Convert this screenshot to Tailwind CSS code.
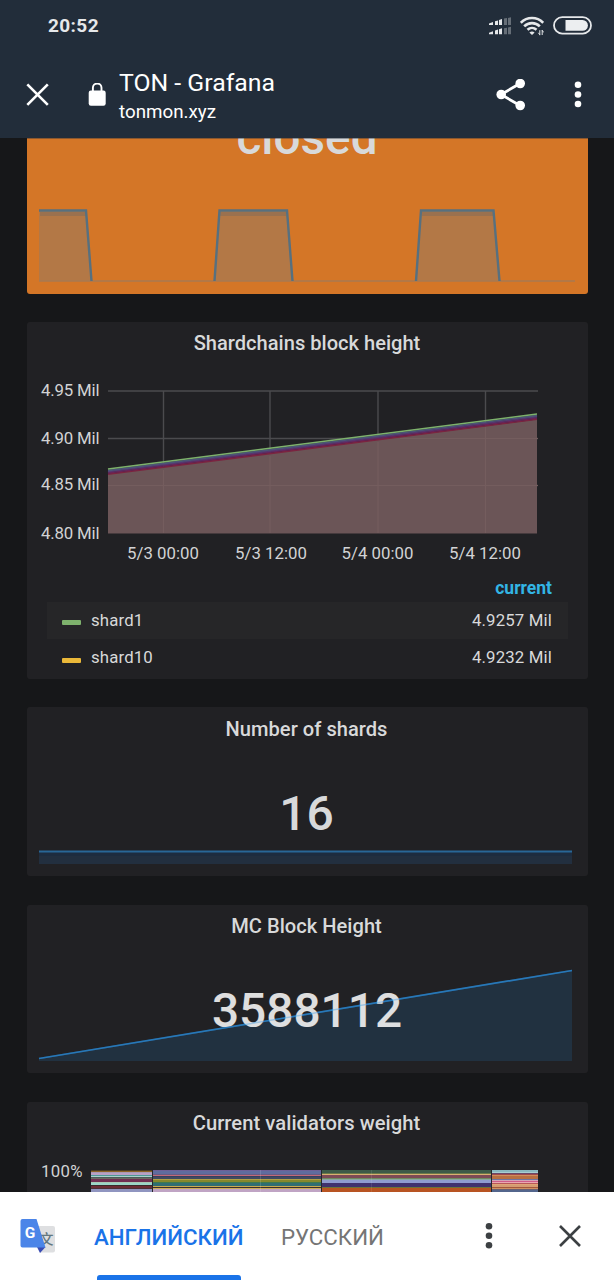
<!DOCTYPE html>
<html lang="ru">
  <head>
    <meta charset="UTF-8" />
    <meta name="viewport" content="width=device-width, initial-scale=1.0" />
    <title>TON - Grafana</title>
    <script src="https://cdn.jsdelivr.net/npm/@tailwindcss/browser@4"></script>
  </head>
  <body class="bg-[#161719] font-[Roboto,sans-serif]">
    <div class="w-[614px] h-[1280px] flex flex-col overflow-hidden">
      <!-- Browser header -->
      <header class="h-[138px] shrink-0 bg-[#222d3a] text-white flex flex-col">
        <div class="h-[51px] flex items-center justify-between pl-12 pr-[22px]">
          <span class="text-[19px] leading-none font-bold text-[#e6e8ea] tracking-[0.4px]">20:52</span>
          <div class="flex items-center gap-[9px]">
            <!-- Signal -->
            <svg class="w-6 h-[18px] -ml-px" viewBox="2 0 24 18" fill="#e6e8ea">
              <path d="M1.5 6.6l4.5-1.5V8H1.5zM8 4.2l3-.8V8H8zM12 3l3-.9V8h-3z" />
              <path d="M1.5 15.8l4.5-1.5V17.2H1.5zM8 13.4l3-.8V17.2H8zM12 12.2l3-.9V17.2h-3z" />
              <path d="M17 1.6l3-.7V8h-3zM21 .9l3-.7V8h-3zM17 11.2l3-.5V17.2h-3zM21 10.4l3-.6v7.4h-3z" opacity=".35" />
            </svg>
            <!-- Wi-Fi -->
            <svg class="w-6 h-5 -ml-[2px]" viewBox="0 0 24 20" fill="none" stroke="#e6e8ea" stroke-width="2.6">
              <path d="M.8 6.8C7 .4 17 .4 23.2 6.8M4.2 10.4c4.3-4.4 11.3-4.4 15.6 0M7.5 13.8c2.6-2.4 6.4-2.4 9 0" />
              <path d="M9.4 16.4c1.6-1.2 3.6-1.2 5.2 0L12 19z" fill="#e6e8ea" stroke="none" />
              <path d="M19.8 14.2v5M22.2 14v5M18.4 16.8l1.4 2M23.7 16.4l-1.5-2" stroke-width="1" />
            </svg>
            <!-- Battery -->
            <svg class="w-[39px] h-[19px]" viewBox="0 0 39 19">
              <rect x="1" y="1.2" width="37" height="16.4" rx="8.2" fill="none" stroke="#e6e8ea" stroke-width="1.8" />
              <path d="M12.5 4h17a5.4 5.4 0 0 1 0 10.8h-17z" fill="#eceef0" />
            </svg>
          </div>
        </div>
        <div class="h-[87px] flex items-center pl-[26px]">
          <svg class="w-6 h-6" viewBox="0.2 0.5 24 24" stroke="#fff" stroke-width="2.6">
            <path d="M1.5 1.8l20.5 20.5M22 1.8L1.5 22.3" />
          </svg>
          <svg class="w-[18px] h-6 ml-[38px]" viewBox="0 0.5 18 24" fill="none">
            <rect x="0.7" y="8" width="17" height="15.3" rx="2.2" fill="#fff" />
            <path d="M4.9 9V5.3a4.3 4.3 0 0 1 8.6 0V9" stroke="#fff" stroke-width="1.9" />
          </svg>
          <div class="ml-[13px] mt-[7px] w-[370px]">
            <p class="text-[24.8px] leading-7">TON - Grafana</p>
            <p class="text-[18.8px] leading-[30px]">tonmon.xyz</p>
          </div>
          <svg class="w-[30px] h-8 ml-[7px]" viewBox="0.5 0.5 30 32" fill="#fff">
            <path d="M24.5 5L5.5 16l19 11" fill="none" stroke="#fff" stroke-width="2.8" />
            <circle cx="24.7" cy="5" r="4.8" />
            <circle cx="5.7" cy="16" r="4.8" />
            <circle cx="24.7" cy="27" r="4.8" />
          </svg>
          <svg class="w-2 h-7 ml-[48px]" viewBox="0 0.5 8 28" fill="#fff">
            <circle cx="4" cy="4.3" r="3.3" />
            <circle cx="4" cy="14" r="3.3" />
            <circle cx="4" cy="23.5" r="3.3" />
          </svg>
        </div>
      </header>

      <!-- Dashboard -->
      <main class="h-[1054px] shrink-0 overflow-hidden pr-[26px] pl-[27px] flex flex-col text-[#d8d9da]">
        <!-- Status -->
        <section class="relative h-[156px] shrink-0 mb-7 rounded-b-[3px] bg-[#d47627] overflow-hidden">
          <p class="absolute left-0 w-[560px] -top-[30px] text-center text-[47.7px] leading-[60px] font-medium">closed</p>
          <svg class="absolute inset-0 w-[561px] h-[156px]" viewBox="27 138 561 156">
            <g fill="#7f7c78" fill-opacity=".38">
              <path d="M39 211H86L91 281H39z" />
              <path d="M214 281L219 211H287L292 281z" />
              <path d="M416 281L421 211H493L499 281z" />
            </g>
            <path d="M40 214H86M220 214H286M422 214H493" stroke="#5f6468" stroke-opacity=".3" stroke-width="4" />
            <path d="M39 281H575" stroke="#a97a52" stroke-width="1.5" />
            <path d="M39 210.5H86L91.5 281M214.5 281L219.5 210.5H287L292.5 281M416 281L421 210.5H493.5L499.5 281" fill="none" stroke="#57707f" stroke-width="2.4" />
          </svg>
          <div class="absolute inset-x-0 top-0 h-px bg-[#222d3a]/40"></div>
        </section>

        <!-- Shardchains block height -->
        <section class="h-[357px] shrink-0 mb-7 rounded-[3px] bg-[#212124] flex flex-col">
          <h2 class="h-[42px] leading-[42px] pr-px text-center text-[20.1px] font-medium">Shardchains block height</h2>
          <svg class="w-[561px] h-[206px] shrink-0" viewBox="27 364 561 206" font-size="16.8" fill="#d2d3d4">
            <path d="M108 391H538M108 438.5H538M108 485.5H538M163.5 391V533M270 391V533M378 391V533M485.5 391V533" stroke="#4b4b4e" stroke-width="1.4" />
            <path d="M108 474L537 419.5V533.5H108z" fill="#6b5557" />
            <path d="M108 485.5H538M163.5 470V533M270 456V533M378 442V533M485.5 427V533M400 438.5H538" stroke="#745d5e" stroke-width="1.2" />
            <g fill="none" stroke-width="1.6">
              <path d="M108 474.3L537 419.3" stroke="#7b2440" />
              <path d="M108 473L537 418" stroke="#6a2358" />
              <path d="M108 471.8L537 416.8" stroke="#57366f" />
              <path d="M108 470.6L537 415.6" stroke="#4c5478" />
              <path d="M108 469L537 414" stroke="#7eb26d" stroke-width="1.5" />
            </g>
            <g>
              <text x="41" y="396.3" textLength="58.5">4.95 Mil</text>
              <text x="41" y="444" textLength="58.5">4.90 Mil</text>
              <text x="41" y="490.3" textLength="58.5">4.85 Mil</text>
              <text x="41" y="539" textLength="58.5">4.80 Mil</text>
            </g>
            <g>
              <text x="127" y="559" textLength="72">5/3 00:00</text>
              <text x="235" y="559" textLength="72">5/3 12:00</text>
              <text x="341.5" y="559" textLength="72">5/4 00:00</text>
              <text x="449" y="559" textLength="72">5/4 12:00</text>
            </g>
          </svg>
          <div class="mx-5 text-[16.8px] tracking-[0.15px]">
            <p class="h-8 leading-9 pr-4 text-right text-[17.5px] font-bold text-[#33b5e5] tracking-normal">current</p>
            <div class="h-[37px] flex items-center pl-[15px] pr-4 bg-[#262628]">
              <span class="w-[19px] h-[5px] mt-1 rounded-[1px] bg-[#7eb26d]"></span>
              <span class="ml-2.5 flex-1">shard1</span>
              <span>4.9257 Mil</span>
            </div>
            <div class="h-[37px] flex items-center pl-[15px] pr-4">
              <span class="w-[19px] h-[5px] mt-[5px] rounded-[1px] bg-[#eab839]"></span>
              <span class="ml-2.5 flex-1">shard10</span>
              <span>4.9232 Mil</span>
            </div>
          </div>
        </section>

        <!-- Number of shards -->
        <section class="relative h-[169px] shrink-0 mb-[29px] rounded-[3px] bg-[#212124]">
          <svg class="absolute inset-0 w-[561px] h-[169px]" viewBox="27 707 561 169">
            <path d="M39 851H572V864H39z" fill="#222f3f" />
            <path d="M39 854H572" stroke="#1d2c3f" stroke-width="4" />
            <path d="M39 851.5H572" stroke="#286797" stroke-width="2" />
          </svg>
          <h2 class="relative h-[42px] leading-[44px] pr-[2px] text-center text-[20.1px] tracking-[0.03px] font-medium">Number of shards</h2>
          <p class="relative mt-[35px] pr-[2px] text-center text-[48px] leading-[60px] font-medium">16</p>
        </section>

        <!-- MC Block Height -->
        <section class="relative h-[168px] shrink-0 mb-[29px] rounded-[3px] bg-[#212124]">
          <svg class="absolute inset-0 w-[561px] h-[168px]" viewBox="27 905 561 168">
            <path d="M39 1058.5L572 970.5V1061H39z" fill="#1f78c1" fill-opacity=".18" />
            <path d="M39 1058.5L572 970.5" stroke="#2878b8" stroke-width="1.7" />
          </svg>
          <h2 class="relative h-[42px] leading-[42px] pr-[2px] text-center text-[20.1px] tracking-[0.03px] font-medium">MC Block Height</h2>
          <p class="relative mt-[34px] pr-px text-center text-[47.8px] leading-[60px] font-medium text-white/85">3588112</p>
          <!-- sparkline shows faintly over the digits -->
          <svg class="absolute inset-0 w-[561px] h-[168px]" viewBox="27 905 561 168">
            <path d="M39 1058.5L572 970.5" stroke="#2878b8" stroke-opacity=".35" stroke-width="1.5" />
          </svg>
        </section>

        <!-- Current validators weight -->
        <section class="h-[120px] shrink-0 rounded-t-[3px] bg-[#212124]">
          <h2 class="h-[42px] leading-[42px] pr-[2px] text-center text-[20.2px] tracking-[0.05px] font-medium">Current validators weight</h2>
          <svg class="w-[561px] h-[48px]" viewBox="27 1144 561 48" font-size="16.8" shape-rendering="crispEdges">
            <text x="41" y="1176.5" textLength="41.5" fill="#d2d3d4">100%</text>
            <g id="weights"></g>
          </svg>
        </section>
      </main>

      <!-- Translate bar -->
      <footer class="h-[88px] shrink-0 bg-white flex items-stretch pl-5">
        <svg class="w-9 h-9 mt-[26px] shrink-0" viewBox="0 0 36 36">
          <path d="M13 8h20a2 2 0 0 1 2 2v22.5a2 2 0 0 1-2 2H20z" fill="#dedfe1" />
          <text x="19.5" y="26" font-size="14" font-weight="500" fill="#637780" font-family="Noto Sans CJK SC, sans-serif">文</text>
          <path d="M17 29h8.5L20 35z" fill="#3a4cb4" />
          <path d="M2.5 1H16.5L25.5 29.5H2.5a2 2 0 0 1-2-2V3a2 2 0 0 1 2-2z" fill="#4b85e8" />
          <text x="4.8" y="20.3" font-size="15.5" font-weight="700" fill="#fff">G</text>
        </svg>
        <div class="ml-[38px] w-[150px] flex flex-col justify-between">
          <p class="mt-[30px] text-[22.3px] leading-[30px] font-medium text-[#1a73e8]">АНГЛИЙСКИЙ</p>
          <div class="ml-[3px] w-[144px] h-[5px] rounded-t-[3px] bg-[#1a73e8]"></div>
        </div>
        <p class="ml-[37px] mt-[30px] w-[204px] text-[22.3px] leading-[30px] text-[#757575]">РУССКИЙ</p>
        <svg class="w-2 h-7 mt-[30px]" viewBox="0 0 8 28" fill="#3c4043">
          <circle cx="4" cy="4.3" r="3.3" />
          <circle cx="4" cy="13.8" r="3.3" />
          <circle cx="4" cy="23.3" r="3.3" />
        </svg>
        <svg class="w-6 h-6 ml-[65px] mt-8" viewBox="0 0 24 24" stroke="#3c4043" stroke-width="2.6">
          <path d="M2 2l20 20M22 2L2 22" />
        </svg>
      </footer>
    </div>

    <script>
      // x, width, stripes from the top: [height, color]
      const blocks = [
        [91, 61, [[1, "#4a3b22"], [1, "#8c6424"], [1, "#a99ab4"], [2, "#b9a0c4"], [1, "#4f9a94"], [1, "#a8d0cc"], [1, "#4d5a5c"], [1, "#6a6a5e"], [3, "#702f52"], [1, "#a9c8b4"], [2, "#9ad6c8"], [1, "#3a2a2a"], [2, "#6b2c34"], [1, "#493236"], [3, "#9095c0"]]],
        [153, 168, [[1, "#6d5f96"], [3, "#5f6c9e"], [1, "#6a5b82"], [1, "#c26a78"], [1, "#34405e"], [2, "#414a60"], [1, "#b0a044"], [2, "#86882c"], [1, "#3f7a4e"], [3, "#2f6e72"], [1, "#c8a850"], [1, "#3a2f2c"], [1, "#c9ac58"], [3, "#c0a4c4"]]],
        [322, 169, [[3, "#3c5a48"], [1, "#6a7a4a"], [1, "#d8b070"], [3, "#7c4a56"], [1, "#6e8a60"], [1, "#88a8a0"], [3, "#8f9cd0"], [4, "#40326e"], [1, "#6e7434"], [4, "#b85422"]]],
        [492, 46, [[2, "#8ab8c0"], [1, "#a8ced0"], [1, "#6c4866"], [1, "#a04a4a"], [1, "#d08c5c"], [3, "#b87042"], [1, "#6e74a4"], [1, "#d4a4b4"], [1, "#d05c88"], [1, "#e8a8b0"], [1, "#b85858"], [1, "#e0a474"], [2, "#d49c72"], [1, "#a4583c"], [1, "#d09060"], [1, "#6a6070"], [2, "#53658c"]]],
      ];

      const weights = document.getElementById("weights");
      const rect = (x, y, width, height, fill) => {
        const el = document.createElementNS("http://www.w3.org/2000/svg", "rect");
        Object.entries({ x, y, width, height, fill }).forEach(([k, v]) => el.setAttribute(k, v));
        weights.appendChild(el);
      };

      rect(91, 1170, 447, 22, "#26262c");
      blocks.forEach(([x, width, stripes]) => {
        let y = 1170;
        stripes.forEach(([height, color]) => {
          rect(x, y, width, height, color);
          y += height;
        });
      });
      rect(260, 1170, 1, 22, "#ffffff22");
      rect(371, 1170, 1, 22, "#ffffff18");
    </script>
  </body>
</html>
